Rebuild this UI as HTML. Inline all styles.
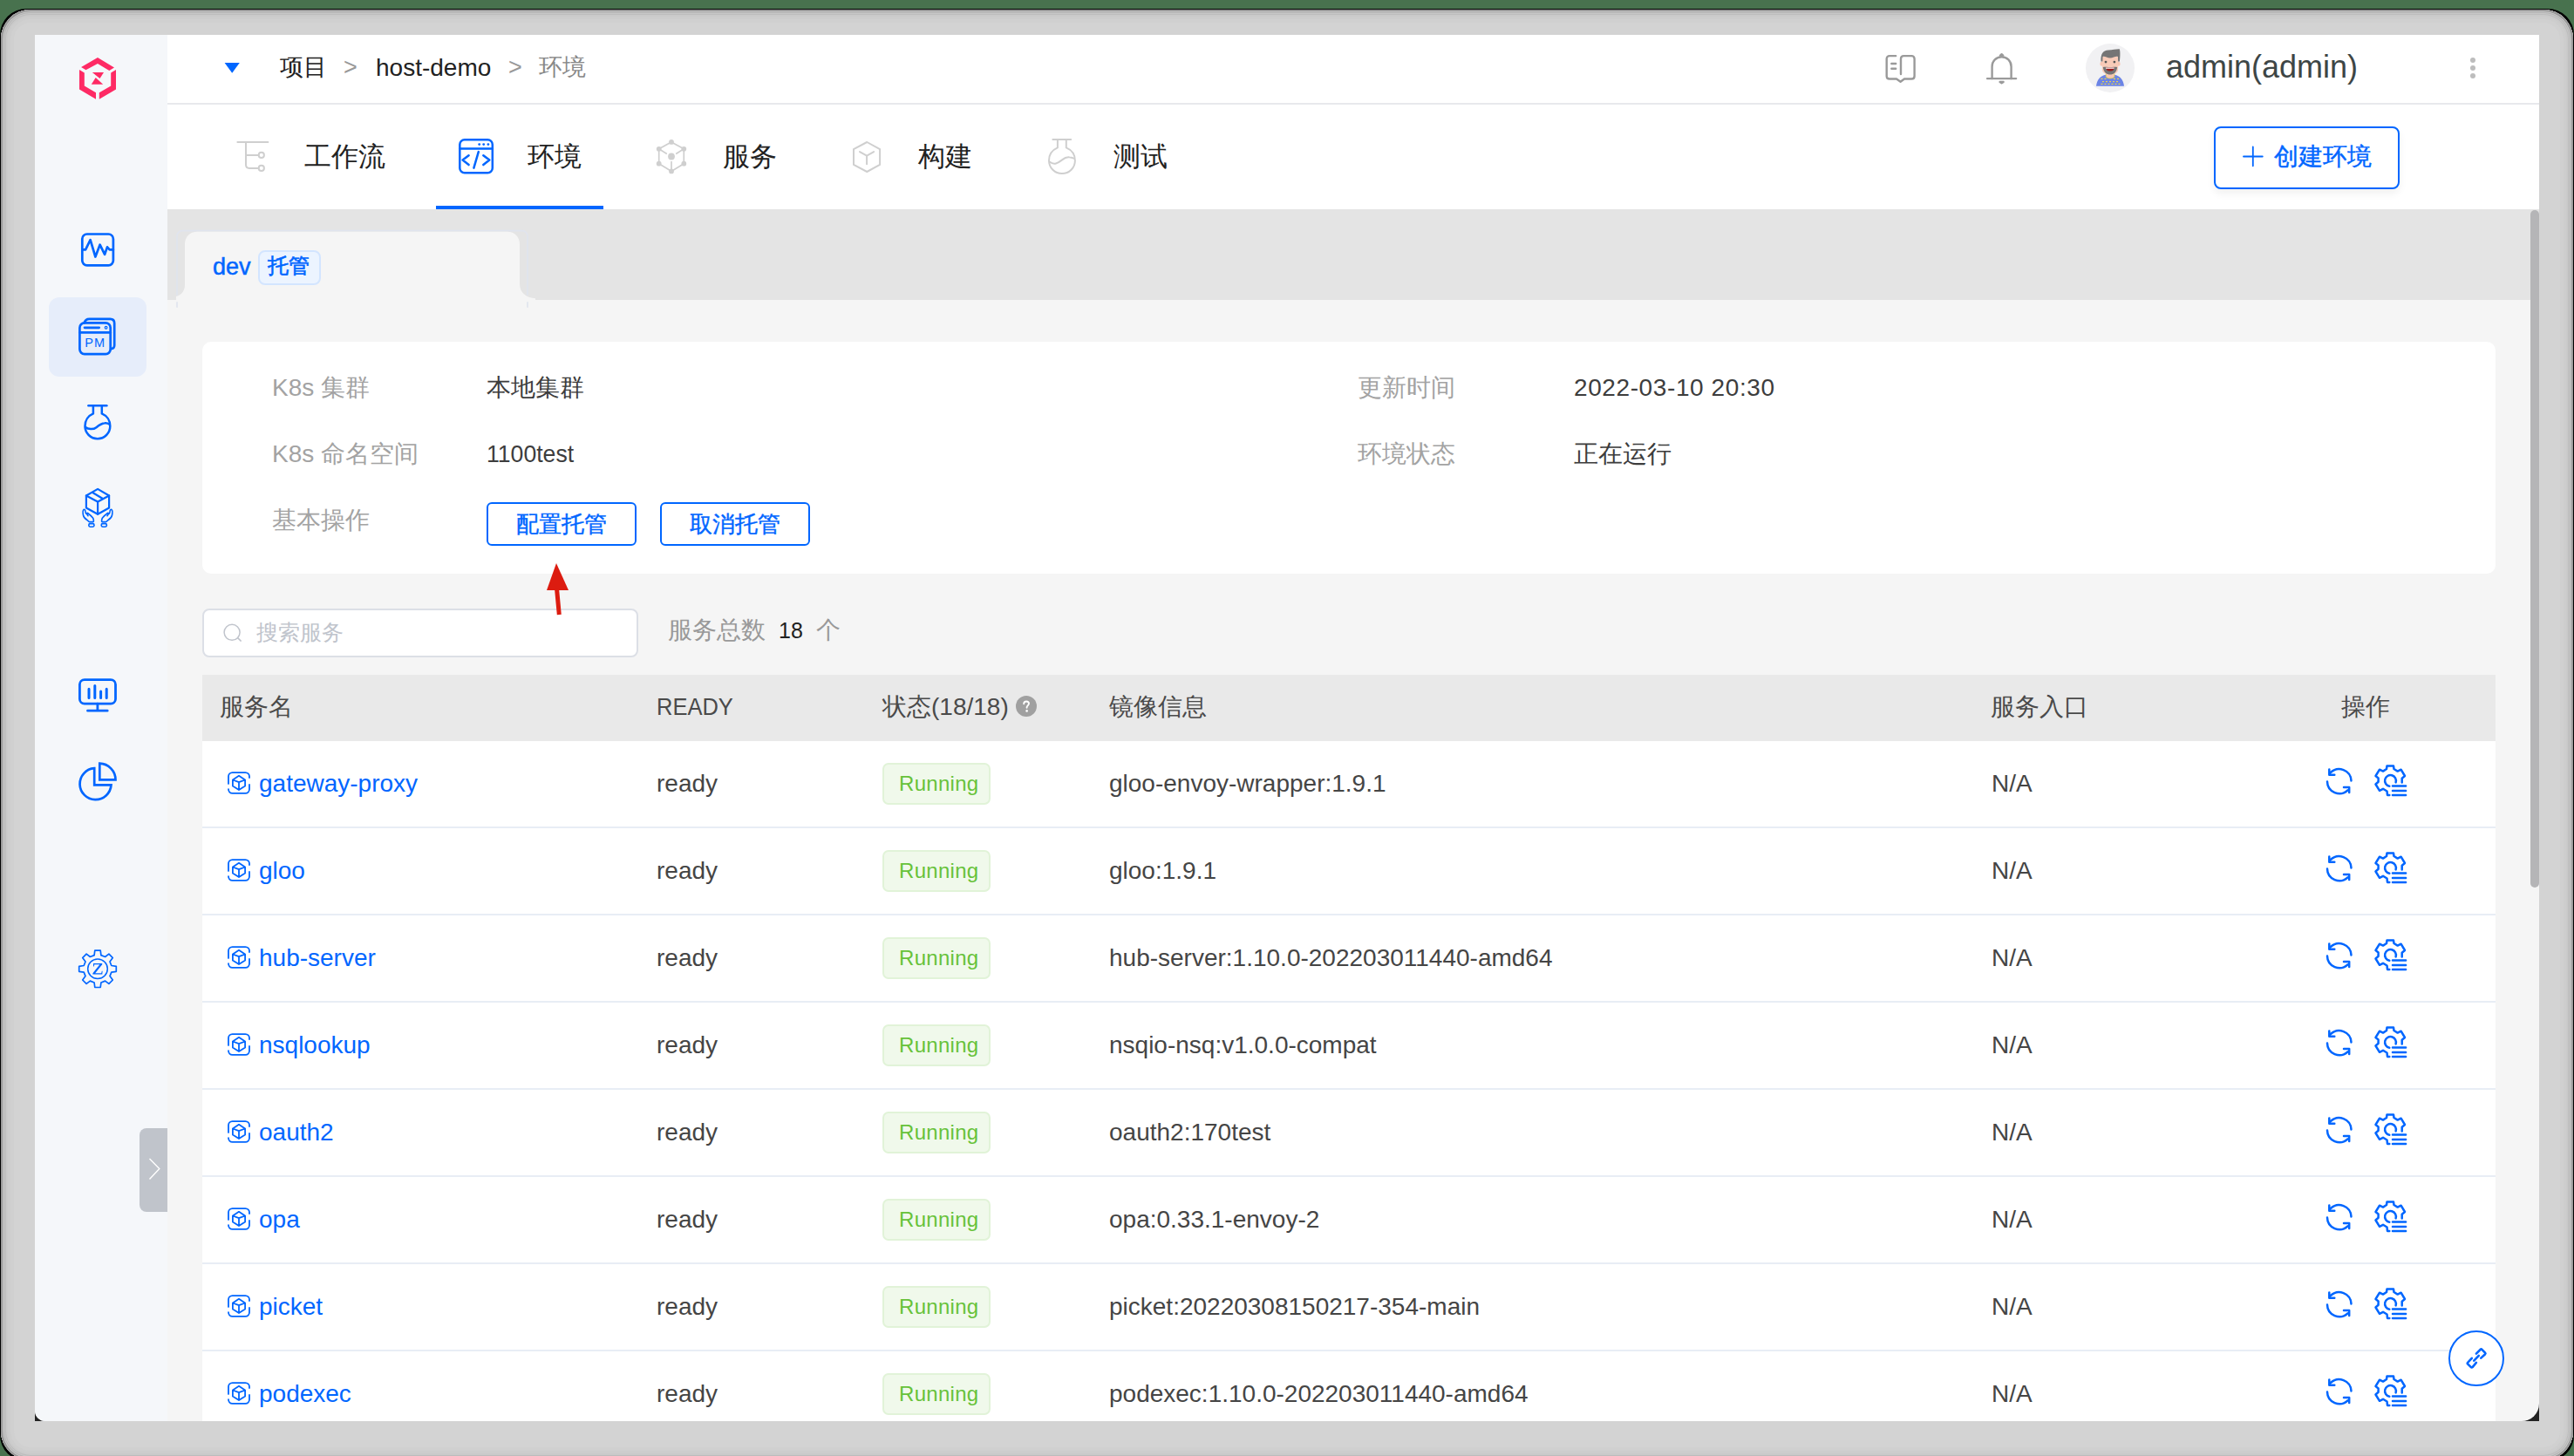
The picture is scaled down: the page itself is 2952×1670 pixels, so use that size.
<!DOCTYPE html>
<html><head><meta charset="utf-8">
<style>
*{box-sizing:border-box;margin:0;padding:0}
html,body{width:2952px;height:1670px;overflow:hidden;background:#48724e;font-family:"Liberation Sans",sans-serif}
.abs{position:absolute}
.t{position:absolute;white-space:nowrap;line-height:1}
svg{position:absolute;overflow:visible}
#frameblack{position:absolute;left:0;top:10px;width:2952px;height:1666px;border-radius:30px;background:#000}
#frame{position:absolute;left:1px;top:11px;width:2950px;height:1664px;border-radius:34px;background:#d3d3d3;box-shadow:inset 0 0 0 1px #9d9d9d,inset 0 0 0 2px #939393,inset 0 0 0 3px #c9c9c9,inset 0 0 0 4px #b3b3b3,inset 0 0 0 5px #c8c8c8,inset 0 0 0 6px #bdbdbd,inset 0 0 0 8px #cacaca,inset 0 0 0 11px #cdcdcd,inset 0 0 0 15px #d0d0d0}
#content{position:absolute;left:40px;top:40px;width:2872px;height:1590px;background:#f5f5f5;overflow:hidden;border-radius:0 0 20px 12px}
.blue{color:#0066ff}
</style></head><body>
<div id="frameblack"></div>
<div id="frame"></div>
<div class="abs" style="left:40px;top:1580px;width:2872px;height:50px;background:#222"></div>
<div id="content"></div>
<!-- sidebar -->
<div class="abs" style="left:40px;top:40px;width:152px;height:1590px;background:#f5f7fa;border-bottom-left-radius:12px"></div>
<!-- header -->
<div class="abs" style="left:192px;top:40px;width:2720px;height:78px;background:#fff"></div>
<div class="abs" style="left:192px;top:118px;width:2720px;height:2px;background:#e8e9ec"></div>
<div class="abs" style="left:192px;top:120px;width:2720px;height:120px;background:#fff"></div>
<!-- env band -->
<div class="abs" style="left:192px;top:240px;width:2720px;height:104px;background:#e4e4e4"></div>

<!-- logo -->
<svg style="left:0;top:0" width="200" height="120" viewBox="0 0 200 120">
<g fill="#fe2a64">
<path d="M93.1 77 L112 65.9 L131 77.5 L125.3 81 L112 72.9 L98.5 80.3 Z"/>
<path d="M91 80 L96.8 83.5 L96.8 98.5 L110 106.3 L110 113.7 L91 102.6 Z"/>
<path d="M133 80 L127.2 83.5 L127.2 98.5 L113.8 106.3 L113.8 113.7 L133 102.6 Z"/>
<path d="M105.8 83.1 L119 83.1 L114.5 89.9 Z"/>
<path d="M104.8 96.7 L118.2 96.7 L109.7 89 Z"/>
</g></svg>
<!-- sidebar icons -->
<svg style="left:82px;top:256px" width="60" height="60" viewBox="0 0 60 60" fill="none" stroke="#0066ff" stroke-width="2.7" stroke-linejoin="round" stroke-linecap="round">
<rect x="12.3" y="12.5" width="35.6" height="35.8" rx="5.5"/>
<path d="M12.5 30.3 L16.1 30.3 L21.6 19.2 L27.4 38.5 L32.6 24.7 L38.1 35.8 L41 27.4 L43.7 30.3 L47.9 30.3"/>
</svg>
<div class="abs" style="left:56px;top:341px;width:112px;height:91px;border-radius:12px;background:#e6edfa"></div>
<svg style="left:82px;top:355px" width="60" height="60" viewBox="0 0 60 60" fill="none" stroke="#0066ff" stroke-width="2.7" stroke-linejoin="round" stroke-linecap="round">
<path d="M14.6 15.4 C15.5 12 17.5 10.8 20.5 10.8 L44.4 10.8 C47.4 10.8 49.2 12.8 49.2 15.8 L49.2 41 C49.2 43.6 47.6 45 45.1 45.2"/>
<rect x="9.4" y="15.4" width="35.3" height="35.7" rx="5.5"/>
<path d="M9.4 26.4 L44.7 26.4"/>
<path d="M15 20.8 L31.7 20.8"/>
<circle cx="39.6" cy="20.8" r="0.6"/>
<text x="27.3" y="42.8" font-family="Liberation Sans" font-size="14.5" fill="#0066ff" stroke="none" text-anchor="middle" letter-spacing="1.2">PM</text>
</svg>
<svg style="left:82px;top:453px" width="60" height="60" viewBox="0 0 60 60" fill="none" stroke="#0066ff" stroke-width="2.5" stroke-linejoin="round" stroke-linecap="round">
<path d="M19.4 12.2 L40.4 12.2"/>
<path d="M24.9 12.2 L24.9 21.4 C19.3 23.8 15.5 29.3 15.5 35.8 C15.5 43.8 22 50.2 29.9 50.2 C37.8 50.2 44.3 43.8 44.3 35.8 C44.3 29.3 40.5 23.8 34.8 21.4 L34.8 12.2"/>
<path d="M16 37 C19 39.5 25 40 28.5 37.2 C31.5 34.8 34 32.8 38 32.3 C40 32 42 32.6 43.6 33.6"/>
</svg>
<svg style="left:82px;top:552px" width="60" height="60" viewBox="0 0 60 60" fill="none" stroke="#0066ff" stroke-width="2.2" stroke-linejoin="round" stroke-linecap="round">
<path d="M30.1 8.9 L43.1 16.5 L43.1 30.5 L30.1 37.7 L16.9 30.5 L16.9 16.5 Z"/>
<path d="M16.9 16.5 L30.1 23.5 L43.1 16.5 M30.1 23.5 L30.1 37.7"/>
<path d="M24.7 13.2 L35.5 19.8" />
<g stroke-width="1.6">
<path d="M14 32.5 C12.8 33.5 13 36.5 13.5 39 C14 41.5 15.5 43 18 44.5 C19.5 45.5 19.5 46.6 20.5 46.6 L25 46.6 C25.6 46.6 25.6 44 24.5 42 C23 40 20.5 38 18.5 36.5 C17.5 36 17 37.5 19 39.7 M14 32.5 C15 32 15.8 33 16 35 C16.2 37 17 38 18.5 36.5"/>
<path d="M46 32.5 C47.2 33.5 47 36.5 46.5 39 C46 41.5 44.5 43 42 44.5 C40.5 45.5 40.5 46.6 39.5 46.6 L35 46.6 C34.4 46.6 34.4 44 35.5 42 C37 40 39.5 38 41.5 36.5 C42.5 36 43 37.5 41 39.7 M46 32.5 C45 32 44.2 33 44 35 C43.8 37 43 38 41.5 36.5"/>
<rect x="19.8" y="48.6" width="6.2" height="3.6" rx="1.6"/>
<rect x="34.2" y="48.6" width="6.2" height="3.6" rx="1.6"/>
</g>
</svg>
<svg style="left:82px;top:766px" width="60" height="60" viewBox="0 0 60 60" fill="none" stroke="#0066ff" stroke-width="2.8" stroke-linejoin="round" stroke-linecap="round">
<rect x="9.4" y="13.6" width="41.1" height="27.6" rx="5.5"/>
<path d="M29.9 41.2 L29.9 49.2 M18.5 49.2 L41.2 49.2"/>
<path d="M20 24.3 L20 34.6 M26.8 20.4 L26.8 34.6 M33.6 27 L33.6 34.6 M40.2 24.3 L40.2 34.6" stroke-width="3"/>
</svg>
<svg style="left:82px;top:866px" width="60" height="60" viewBox="0 0 60 60" fill="none" stroke="#0066ff" stroke-width="2.7" stroke-linejoin="miter">
<path d="M32.3 9.7 L32.3 28.4 L50.5 28.4 A18.7 18.7 0 0 0 32.3 9.7 Z"/>
<path d="M26.2 15.2 L26.2 34.4 L45.5 34.4 A18 18 0 1 1 26.2 15.2 Z"/>
</svg>
<svg style="left:82px;top:1082px" width="60" height="60" viewBox="0 0 60 60" fill="none" stroke="#0066ff" stroke-width="1.7" stroke-linejoin="round">
<path id="gearz" d="M26.8 8.2 L33.2 8.2 L33.9 13.6 L38.6 15.5 L42.9 12.2 L47.3 16.6 L44 21 L45.8 25.5 L51.3 26.3 L51.3 32.3 L45.8 33.1 L44 37.6 L47.3 42 L42.9 46.4 L38.6 43.1 L33.9 45 L33.2 50.5 L26.8 50.5 L26.1 45 L21.4 43.1 L17.1 46.4 L12.7 42 L16 37.6 L14.2 33.1 L8.7 32.3 L8.7 26.3 L14.2 25.5 L16 21 L12.7 16.6 L17.1 12.2 L21.4 15.5 L26.1 13.6 Z"/>
<circle cx="30" cy="29.3" r="11.3" stroke-width="1.5"/>
<path d="M25 23 L35.2 23 L35.2 24.2 L27.2 34.2 L34.2 34.2 L34.8 31.8 L35.6 31.8 L35.3 35.5 L24.4 35.5 L24.4 34.3 L32.4 24.3 L26.2 24.3 L25.8 26.6 L25 26.6 Z" fill="#0066ff" stroke="none"/>
</svg>
<!-- sidebar collapse tab -->
<div class="abs" style="left:160px;top:1294px;width:32px;height:96px;background:#c0c4cb;border-radius:8px 0 0 8px"></div>
<svg style="left:160px;top:1294px" width="32" height="96" viewBox="0 0 32 96" fill="none" stroke="#fff" stroke-width="1.4"><path d="M11.5 35 L22.8 46.5 L11.5 58.5"/></svg>

<!-- header breadcrumb -->
<svg style="left:256px;top:70px" width="20" height="16" viewBox="0 0 20 16"><path d="M1.6 2 L18.8 2 L10.2 13.7 Z" fill="#0066ff"/></svg>
<div class="t" style="left:321px;top:64px;font-size:27px;color:#222">项目</div>
<div class="t" style="left:394px;top:64px;font-size:27px;color:#999">&gt;</div>
<div class="t" style="left:431px;top:64px;font-size:28px;color:#222">host-demo</div>
<div class="t" style="left:583px;top:64px;font-size:27px;color:#999">&gt;</div>
<div class="t" style="left:618px;top:64px;font-size:27px;color:#888">环境</div>
<!-- header right -->
<svg style="left:2150px;top:50px" width="60" height="60" viewBox="0 0 60 60" fill="none" stroke="#9a9a9a" stroke-width="2.4" stroke-linejoin="round" stroke-linecap="round">
<path d="M24.2 14.1 L17 14.1 C15 14.1 13.7 15.4 13.7 17.4 L13.7 37.2 C13.7 39.2 15 40.5 17 40.5 L25 40.5 L29.6 43.8 L34 40.5 L42.3 40.5 C44.3 40.5 45.6 39.2 45.6 37.2 L45.6 17.4 C45.6 15.4 44.3 14.1 42.3 14.1 L33.3 14.1 C31.3 14.1 30 15.4 30 17.4 L30 35"/>
<path d="M19.3 23 L24.2 23 M19.3 28.8 L24.2 28.8"/>
</svg>
<svg style="left:2266px;top:50px" width="60" height="60" viewBox="0 0 60 60" fill="none" stroke="#9a9a9a" stroke-width="2.4" stroke-linejoin="round" stroke-linecap="round">
<path d="M13.1 40.1 L46.1 40.1"/>
<path d="M18.6 40.1 L18.6 26.5 C18.6 20 23.5 15.3 29.6 15.3 C35.7 15.3 40.6 20 40.6 26.5 L40.6 40.1"/>
<path d="M28 13.6 L31.2 13.6 L29.6 12.2 Z" fill="#9a9a9a"/>
<path d="M27.6 44 L31.6 44 L29.6 45.3 Z" fill="#9a9a9a"/>
</svg>
<div class="abs" style="left:2392px;top:50px;width:56px;height:56px;border-radius:50%;background:#f1f1f3;overflow:hidden">
<svg style="left:0;top:0" width="56" height="56" viewBox="0 0 56 56">
<path d="M12 48.7 C13 41 17 37 23 35.8 L33 35.8 C39 37 43 41 44 48.7 Z" fill="#6b84e6"/>
<g fill="#e8d44d"><rect x="17.5" y="39.8" width="2" height="1.2"/><rect x="21.5" y="39.8" width="2" height="1.2"/><rect x="32" y="39.8" width="2" height="1.2"/><rect x="36" y="39.8" width="2" height="1.2"/>
<rect x="19" y="43" width="2" height="1.2"/><rect x="23" y="43" width="2" height="1.2"/><rect x="27" y="43" width="2" height="1.2"/><rect x="31" y="43" width="2" height="1.2"/><rect x="35" y="43" width="2" height="1.2"/>
<rect x="17.5" y="45.8" width="2" height="1.2"/><rect x="21.5" y="45.8" width="2" height="1.2"/><rect x="25.5" y="45.8" width="2" height="1.2"/><rect x="29.5" y="45.8" width="2" height="1.2"/><rect x="33.5" y="45.8" width="2" height="1.2"/><rect x="37.5" y="45.8" width="2" height="1.2"/></g>
<path d="M23.3 34 L23.3 38 C25 40.5 31 40.5 32.9 38 L32.9 34 Z" fill="#f7c6b4" stroke="#e8d44d" stroke-width="0.9"/>
<ellipse cx="18.2" cy="23.2" rx="1.8" ry="2.6" fill="#f7c6b4"/><ellipse cx="37.8" cy="23.2" rx="1.8" ry="2.6" fill="#f7c6b4"/>
<path d="M18.9 15 L37.1 15 L37.1 30 C37.1 33.5 33 35.6 28 35.6 C23 35.6 18.9 33.5 18.9 30 Z" fill="#f8cbb8"/>
<path d="M17.5 20.6 C17 12 19.5 8 26 7.6 C31 7.3 36 6 38.8 6.3 C39.8 9 39.5 16 38.9 20.6 L37.1 20.6 L37 15 C34 14 32 16.5 28 16.5 C24 16.5 22 14 19.5 15 L19.3 20.6 Z" fill="#757575"/>
<path d="M19.8 27 C20.5 33 24 35.6 28 35.6 C32 35.6 35.5 33 36.2 27 L34.5 26.8 C33 27 23 27 21.5 26.8 Z" fill="#757575"/>
<path d="M22.8 27.4 L32.9 27.4 L32 30 C30.5 32 25.5 32 24 30 Z" fill="#9b1c1c"/>
<path d="M22.8 27.4 L32.9 27.4 L32.6 28.7 L23.1 28.7 Z" fill="#fff"/>
<circle cx="23" cy="21.1" r="1.4" fill="#555"/><circle cx="32.9" cy="21.1" r="1.4" fill="#555"/>
</svg></div>
<div class="t" style="left:2484px;top:59px;font-size:36px;color:#3e4646">admin(admin)</div>
<div class="abs" style="left:2833px;top:66px;width:6px;height:6px;border-radius:50%;background:#bdbdbd"></div>
<div class="abs" style="left:2833px;top:75px;width:6px;height:6px;border-radius:50%;background:#bdbdbd"></div>
<div class="abs" style="left:2833px;top:84px;width:6px;height:6px;border-radius:50%;background:#bdbdbd"></div>
<!-- tabs -->
<svg style="left:260px;top:150px" width="60" height="60" viewBox="0 0 60 60" fill="none" stroke="#cfcfcf" stroke-width="2" stroke-linecap="round" stroke-linejoin="round">
<path d="M12.4 12.9 L47.4 12.9"/>
<path d="M22 12.9 L22 39 C22 41.5 23.5 42.9 26 42.9 L36 42.9"/>
<path d="M22 27.9 L36 27.9"/>
<circle cx="39.8" cy="27.9" r="3.1"/>
<circle cx="39.8" cy="42.9" r="3.1"/>
</svg>
<div class="t" style="left:349px;top:164px;font-size:31px;color:#222">工作流</div>
<svg style="left:516px;top:150px" width="60" height="60" viewBox="0 0 60 60" fill="none" stroke="#0066ff" stroke-width="2.5" stroke-linecap="round" stroke-linejoin="round">
<rect x="11.3" y="10.3" width="37.5" height="38" rx="5.5"/>
<path d="M11.3 20.6 L48.8 20.6"/>
<path d="M21.6 28.2 L14.6 33.6 L21.6 39.1 M32.8 24.1 L27.4 42.6 M38.3 28.2 L45.3 33.6 L38.3 39.1"/>
<g fill="#0066ff" stroke="none"><circle cx="33.7" cy="15.6" r="1.4"/><circle cx="38.7" cy="15.6" r="1.4"/><circle cx="43.9" cy="15.6" r="1.4"/></g>
</svg>
<div class="t" style="left:605px;top:164px;font-size:31px;color:#222">环境</div>
<div class="abs" style="left:500px;top:236px;width:192px;height:4px;background:#0066ff"></div>
<svg style="left:740px;top:150px" width="60" height="60" viewBox="0 0 60 60" fill="#cfcfcf" stroke="#cfcfcf" stroke-width="1.7">
<path d="M30 12.9 L44.3 20.8 L44.3 37.7 L30 46.4 L15.7 37.7 L15.7 20.8 Z" fill="none"/>
<path d="M15.7 20.8 L24.8 26.5 M44.3 20.8 L35.2 26.5 M30 35 L30 46.4" fill="none"/>
<circle cx="30" cy="12.9" r="2.9" stroke="none"/><circle cx="15.7" cy="20.8" r="2.9" stroke="none"/><circle cx="44.3" cy="20.8" r="2.9" stroke="none"/>
<circle cx="15.7" cy="37.7" r="2.9" stroke="none"/><circle cx="44.3" cy="37.7" r="2.9" stroke="none"/><circle cx="30" cy="46.4" r="2.9" stroke="none"/>
<circle cx="30" cy="29.5" r="3.9" stroke="none"/>
</svg>
<div class="t" style="left:829px;top:164px;font-size:31px;color:#222">服务</div>
<svg style="left:964px;top:150px" width="60" height="60" viewBox="0 0 60 60" fill="none" stroke="#cfcfcf" stroke-width="2" stroke-linecap="round" stroke-linejoin="round">
<path d="M30.3 13 L45.1 21.2 L45.1 38.9 L30.3 47 L15 38.9 L15 21.2 Z"/>
<path d="M22 24.1 L30.1 28.6 L38.1 24.1 M30.1 28.6 L30.1 38.3"/>
</svg>
<div class="t" style="left:1053px;top:164px;font-size:31px;color:#222">构建</div>
<svg style="left:1188px;top:150px" width="60" height="60" viewBox="0 0 60 60" fill="none" stroke="#cfcfcf" stroke-width="2" stroke-linecap="round" stroke-linejoin="round">
<path d="M19.4 9.9 L40.2 9.9"/>
<path d="M24.9 9.9 L24.9 19.4 C19 22 15 27.5 15 34.2 C15 42.4 21.7 49 30 49 C38.3 49 44.9 42.4 44.9 34.2 C44.9 27.5 41 22 34.8 19.4 L34.8 9.9"/>
<path d="M16 35.8 C18.5 37.8 21 38 23 37.5 C26 36.8 28 34.8 30 33.4 C33 31 36 30 38.3 30.3 C40.5 30.5 42 31 43.5 31.6"/>
</svg>
<div class="t" style="left:1277px;top:164px;font-size:31px;color:#222">测试</div>
<!-- create env button -->
<div class="abs" style="left:2539px;top:145px;width:213px;height:72px;border:2px solid #0066ff;border-radius:8px;background:#fff;box-shadow:0 5px 10px rgba(0,0,0,0.06)"></div>
<svg style="left:2570px;top:166px" width="28" height="28" viewBox="0 0 28 28" stroke="#0066ff" stroke-width="1.8" stroke-linecap="round"><path d="M13.8 2.5 L13.8 24.3 M3 13.5 L24.8 13.5"/></svg>
<div class="t" style="left:2608px;top:166px;font-size:28px;color:#0066ff;font-weight:500;-webkit-text-stroke:0.4px #0066ff">创建环境</div>

<!-- env tab -->
<svg style="left:192px;top:240px" width="440" height="120" viewBox="0 0 440 120">
<path d="M11 98.7 L11 30.7 C11 27.2 13.8 24.7 17.4 24.7 L406.6 24.7 C410.2 24.7 413 27.2 413 30.7 L413 98.7 M11 106.3 L11 112.8 M413 106.3 L413 112.8" fill="none" stroke="#e0e4ee" stroke-width="1.7"/>
<path d="M10 104 L10 100.1 C16 98.5 20 93.5 20 87 L20 40 C20 31.7 26 25.8 34 25.8 L390 25.8 C398 25.8 404 31.7 404 40 L404 85.7 C404 95 411 101.5 422 102.3 L422 104 Z" fill="#f5f5f5"/>
</svg>
<div class="t" style="left:244px;top:293px;font-size:27px;color:#0066ff;-webkit-text-stroke:0.5px #0066ff">dev</div>
<div class="abs" style="left:296px;top:287px;width:72px;height:40px;border-radius:8px;background:#ecf4ff;border:2px solid #d3e5ff"></div>
<div class="t" style="left:307px;top:293px;font-size:24px;color:#0066ff;font-weight:500;-webkit-text-stroke:0.6px #0066ff">托管</div>
<!-- info card -->
<div class="abs" style="left:232px;top:392px;width:2630px;height:266px;border-radius:10px;background:#fff"></div>
<div class="t" style="left:312px;top:431px;font-size:28px;color:#a3a3a3">K8s 集群</div>
<div class="t" style="left:558px;top:431px;font-size:28px;color:#3d3d3d">本地集群</div>
<div class="t" style="left:312px;top:507px;font-size:28px;color:#a3a3a3">K8s 命名空间</div>
<div class="t" style="left:558px;top:507px;font-size:28px;color:#3d3d3d;transform:scaleX(0.95);transform-origin:0 0">1100test</div>
<div class="t" style="left:312px;top:583px;font-size:28px;color:#a3a3a3">基本操作</div>
<div class="abs" style="left:558px;top:576px;width:172px;height:50px;border:2px solid #0066ff;border-radius:6px"></div>
<div class="t" style="left:592px;top:588px;font-size:26px;color:#0066ff;font-weight:500;-webkit-text-stroke:0.4px #0066ff">配置托管</div>
<div class="abs" style="left:757px;top:576px;width:172px;height:50px;border:2px solid #0066ff;border-radius:6px"></div>
<div class="t" style="left:791px;top:588px;font-size:26px;color:#0066ff;font-weight:500;-webkit-text-stroke:0.4px #0066ff">取消托管</div>
<div class="t" style="left:1557px;top:431px;font-size:28px;color:#a3a3a3">更新时间</div>
<div class="t" style="left:1805px;top:431px;font-size:28px;color:#3d3d3d;letter-spacing:0.6px">2022-03-10 20:30</div>
<div class="t" style="left:1557px;top:507px;font-size:28px;color:#a3a3a3">环境状态</div>
<div class="t" style="left:1805px;top:507px;font-size:28px;color:#3d3d3d">正在运行</div>
<!-- red arrow -->
<svg style="left:600px;top:640px;z-index:5" width="80" height="80" viewBox="0 0 80 80">
<path d="M38 6 L52 37 L27 37 Z" fill="#dc1c10"/>
<path d="M38.5 35 L41.3 65" stroke="#dc1c10" stroke-width="5"/>
</svg>
<!-- search -->
<div class="abs" style="left:232px;top:698px;width:500px;height:56px;border:2px solid #dcdfe6;border-radius:8px;background:#fff"></div>
<svg style="left:254px;top:713px" width="26" height="26" viewBox="0 0 26 26" fill="none" stroke="#c0c4cc" stroke-width="1.5" stroke-linecap="round"><circle cx="12.1" cy="12.3" r="9"/><path d="M18.6 18.6 L22.2 22.1"/></svg>
<div class="t" style="left:294px;top:713px;font-size:25px;color:#c0c4cc">搜索服务</div>
<div class="t" style="left:766px;top:709px;font-size:28px;color:#999">服务总数</div>
<div class="t" style="left:893px;top:711px;font-size:25px;color:#222">18</div>
<div class="t" style="left:936px;top:709px;font-size:28px;color:#999">个</div>
<!-- table header -->
<div class="abs" style="left:232px;top:774px;width:2630px;height:76px;background:#e9e9e9"></div>
<div class="t" style="left:252px;top:797px;font-size:28px;color:#4a4a4a">服务名</div>
<div class="t" style="left:753px;top:797px;font-size:28px;color:#4a4a4a;transform:scaleX(0.91);transform-origin:0 0">READY</div>
<div class="t" style="left:1012px;top:797px;font-size:28px;color:#4a4a4a">状态(18/18)</div>
<svg style="left:1165px;top:798px" width="24" height="24" viewBox="0 0 24 24"><circle cx="12" cy="12" r="12" fill="#a0a0a0"/><path d="M9.2 9.3 C9.2 7.6 10.5 6.5 12.1 6.5 C13.8 6.5 15 7.6 15 9.1 C15 11 12.6 11.2 12.6 13.3 L12.6 13.8" fill="none" stroke="#fff" stroke-width="1.9" stroke-linecap="round"/><circle cx="12.6" cy="17.4" r="1.3" fill="#fff"/></svg>
<div class="t" style="left:1272px;top:797px;font-size:28px;color:#4a4a4a">镜像信息</div>
<div class="t" style="left:2283px;top:797px;font-size:28px;color:#4a4a4a">服务入口</div>
<div class="t" style="left:2685px;top:797px;font-size:28px;color:#4a4a4a">操作</div>
<!-- rows -->
<div class="abs" style="left:232px;top:850px;width:2630px;height:100px;background:#fff;border-bottom:2px solid #e8edf5"></div>
<svg style="left:254px;top:878px" width="40" height="40" viewBox="0 0 40 40" fill="none" stroke="#0066ff" stroke-width="1.8" stroke-linecap="round" stroke-linejoin="round"><path d="M8 20.9 L8 12.6 C8 10 10 8.1 12.6 8.1 L27.4 8.1 C30 8.1 32 10 32 12.6 L32 14 M32 22 L32 27.3 C32 29.8 30 31.8 27.4 31.8 L12.6 31.8 C10 31.8 8 29.8 8 27.3 L8 27.2"/><path d="M20 11.8 L27.1 16.5 L27.1 23.5 L20 28 L12.9 23.5 L12.9 16.5 Z M12.9 16.5 L20 19.2 L27.1 16.5 M20 19.2 L20 28"/></svg>
<div class="t" style="left:297px;top:885px;font-size:28px;color:#0066ff">gateway-proxy</div>
<div class="t" style="left:753px;top:885px;font-size:28px;color:#454545">ready</div>
<div class="abs" style="left:1012px;top:875px;width:124px;height:48px;border-radius:7px;background:#f0f9eb;border:2px solid #e1f3d8"></div>
<div class="t" style="left:1031px;top:887px;font-size:24px;color:#67c23a;letter-spacing:0.3px">Running</div>
<div class="t" style="left:1272px;top:885px;font-size:28px;color:#454545">gloo-envoy-wrapper:1.9.1</div>
<div class="t" style="left:2284px;top:885px;font-size:28px;color:#454545">N/A</div>
<svg style="left:2660px;top:870px" width="110" height="55" viewBox="0 0 110 55" fill="none" stroke="#0066ff" stroke-width="2.5" stroke-linecap="round" stroke-linejoin="round">
<path d="M36.5 25.4 A13.9 13.9 0 0 0 12.8 16.2 M11.3 12.4 L11.3 18.8 L17.3 18.8"/>
<path d="M9 26.5 A13.9 13.9 0 0 0 32.5 36.3 M28 32.9 L34.2 32.9 L34.2 39.1"/>
<path d="M80.3 41.9 L78 41.9 L77.5 37.5 L73 34.8 L69 36.8 L64.5 29.5 L67.6 26.8 L67.6 22.5 L64.5 20 L69 12.7 L73 14.6 L77 12 L77.5 8.5 L85 8.5 L85.5 12 L89.7 14.6 L93.6 12.7 L98 20 L94.7 22.7 L94.7 27.4"/>
<path d="M87.6 27.4 A6.4 6.4 0 1 0 80.3 31.8"/>
<path d="M84 31.6 L99.1 31.6 M84 37 L99.1 37 M84 42.1 L99.1 42.1"/>
</svg>

<div class="abs" style="left:232px;top:950px;width:2630px;height:100px;background:#fff;border-bottom:2px solid #e8edf5"></div>
<svg style="left:254px;top:978px" width="40" height="40" viewBox="0 0 40 40" fill="none" stroke="#0066ff" stroke-width="1.8" stroke-linecap="round" stroke-linejoin="round"><path d="M8 20.9 L8 12.6 C8 10 10 8.1 12.6 8.1 L27.4 8.1 C30 8.1 32 10 32 12.6 L32 14 M32 22 L32 27.3 C32 29.8 30 31.8 27.4 31.8 L12.6 31.8 C10 31.8 8 29.8 8 27.3 L8 27.2"/><path d="M20 11.8 L27.1 16.5 L27.1 23.5 L20 28 L12.9 23.5 L12.9 16.5 Z M12.9 16.5 L20 19.2 L27.1 16.5 M20 19.2 L20 28"/></svg>
<div class="t" style="left:297px;top:985px;font-size:28px;color:#0066ff">gloo</div>
<div class="t" style="left:753px;top:985px;font-size:28px;color:#454545">ready</div>
<div class="abs" style="left:1012px;top:975px;width:124px;height:48px;border-radius:7px;background:#f0f9eb;border:2px solid #e1f3d8"></div>
<div class="t" style="left:1031px;top:987px;font-size:24px;color:#67c23a;letter-spacing:0.3px">Running</div>
<div class="t" style="left:1272px;top:985px;font-size:28px;color:#454545">gloo:1.9.1</div>
<div class="t" style="left:2284px;top:985px;font-size:28px;color:#454545">N/A</div>
<svg style="left:2660px;top:970px" width="110" height="55" viewBox="0 0 110 55" fill="none" stroke="#0066ff" stroke-width="2.5" stroke-linecap="round" stroke-linejoin="round">
<path d="M36.5 25.4 A13.9 13.9 0 0 0 12.8 16.2 M11.3 12.4 L11.3 18.8 L17.3 18.8"/>
<path d="M9 26.5 A13.9 13.9 0 0 0 32.5 36.3 M28 32.9 L34.2 32.9 L34.2 39.1"/>
<path d="M80.3 41.9 L78 41.9 L77.5 37.5 L73 34.8 L69 36.8 L64.5 29.5 L67.6 26.8 L67.6 22.5 L64.5 20 L69 12.7 L73 14.6 L77 12 L77.5 8.5 L85 8.5 L85.5 12 L89.7 14.6 L93.6 12.7 L98 20 L94.7 22.7 L94.7 27.4"/>
<path d="M87.6 27.4 A6.4 6.4 0 1 0 80.3 31.8"/>
<path d="M84 31.6 L99.1 31.6 M84 37 L99.1 37 M84 42.1 L99.1 42.1"/>
</svg>

<div class="abs" style="left:232px;top:1050px;width:2630px;height:100px;background:#fff;border-bottom:2px solid #e8edf5"></div>
<svg style="left:254px;top:1078px" width="40" height="40" viewBox="0 0 40 40" fill="none" stroke="#0066ff" stroke-width="1.8" stroke-linecap="round" stroke-linejoin="round"><path d="M8 20.9 L8 12.6 C8 10 10 8.1 12.6 8.1 L27.4 8.1 C30 8.1 32 10 32 12.6 L32 14 M32 22 L32 27.3 C32 29.8 30 31.8 27.4 31.8 L12.6 31.8 C10 31.8 8 29.8 8 27.3 L8 27.2"/><path d="M20 11.8 L27.1 16.5 L27.1 23.5 L20 28 L12.9 23.5 L12.9 16.5 Z M12.9 16.5 L20 19.2 L27.1 16.5 M20 19.2 L20 28"/></svg>
<div class="t" style="left:297px;top:1085px;font-size:28px;color:#0066ff">hub-server</div>
<div class="t" style="left:753px;top:1085px;font-size:28px;color:#454545">ready</div>
<div class="abs" style="left:1012px;top:1075px;width:124px;height:48px;border-radius:7px;background:#f0f9eb;border:2px solid #e1f3d8"></div>
<div class="t" style="left:1031px;top:1087px;font-size:24px;color:#67c23a;letter-spacing:0.3px">Running</div>
<div class="t" style="left:1272px;top:1085px;font-size:28px;color:#454545">hub-server:1.10.0-202203011440-amd64</div>
<div class="t" style="left:2284px;top:1085px;font-size:28px;color:#454545">N/A</div>
<svg style="left:2660px;top:1070px" width="110" height="55" viewBox="0 0 110 55" fill="none" stroke="#0066ff" stroke-width="2.5" stroke-linecap="round" stroke-linejoin="round">
<path d="M36.5 25.4 A13.9 13.9 0 0 0 12.8 16.2 M11.3 12.4 L11.3 18.8 L17.3 18.8"/>
<path d="M9 26.5 A13.9 13.9 0 0 0 32.5 36.3 M28 32.9 L34.2 32.9 L34.2 39.1"/>
<path d="M80.3 41.9 L78 41.9 L77.5 37.5 L73 34.8 L69 36.8 L64.5 29.5 L67.6 26.8 L67.6 22.5 L64.5 20 L69 12.7 L73 14.6 L77 12 L77.5 8.5 L85 8.5 L85.5 12 L89.7 14.6 L93.6 12.7 L98 20 L94.7 22.7 L94.7 27.4"/>
<path d="M87.6 27.4 A6.4 6.4 0 1 0 80.3 31.8"/>
<path d="M84 31.6 L99.1 31.6 M84 37 L99.1 37 M84 42.1 L99.1 42.1"/>
</svg>

<div class="abs" style="left:232px;top:1150px;width:2630px;height:100px;background:#fff;border-bottom:2px solid #e8edf5"></div>
<svg style="left:254px;top:1178px" width="40" height="40" viewBox="0 0 40 40" fill="none" stroke="#0066ff" stroke-width="1.8" stroke-linecap="round" stroke-linejoin="round"><path d="M8 20.9 L8 12.6 C8 10 10 8.1 12.6 8.1 L27.4 8.1 C30 8.1 32 10 32 12.6 L32 14 M32 22 L32 27.3 C32 29.8 30 31.8 27.4 31.8 L12.6 31.8 C10 31.8 8 29.8 8 27.3 L8 27.2"/><path d="M20 11.8 L27.1 16.5 L27.1 23.5 L20 28 L12.9 23.5 L12.9 16.5 Z M12.9 16.5 L20 19.2 L27.1 16.5 M20 19.2 L20 28"/></svg>
<div class="t" style="left:297px;top:1185px;font-size:28px;color:#0066ff">nsqlookup</div>
<div class="t" style="left:753px;top:1185px;font-size:28px;color:#454545">ready</div>
<div class="abs" style="left:1012px;top:1175px;width:124px;height:48px;border-radius:7px;background:#f0f9eb;border:2px solid #e1f3d8"></div>
<div class="t" style="left:1031px;top:1187px;font-size:24px;color:#67c23a;letter-spacing:0.3px">Running</div>
<div class="t" style="left:1272px;top:1185px;font-size:28px;color:#454545">nsqio-nsq:v1.0.0-compat</div>
<div class="t" style="left:2284px;top:1185px;font-size:28px;color:#454545">N/A</div>
<svg style="left:2660px;top:1170px" width="110" height="55" viewBox="0 0 110 55" fill="none" stroke="#0066ff" stroke-width="2.5" stroke-linecap="round" stroke-linejoin="round">
<path d="M36.5 25.4 A13.9 13.9 0 0 0 12.8 16.2 M11.3 12.4 L11.3 18.8 L17.3 18.8"/>
<path d="M9 26.5 A13.9 13.9 0 0 0 32.5 36.3 M28 32.9 L34.2 32.9 L34.2 39.1"/>
<path d="M80.3 41.9 L78 41.9 L77.5 37.5 L73 34.8 L69 36.8 L64.5 29.5 L67.6 26.8 L67.6 22.5 L64.5 20 L69 12.7 L73 14.6 L77 12 L77.5 8.5 L85 8.5 L85.5 12 L89.7 14.6 L93.6 12.7 L98 20 L94.7 22.7 L94.7 27.4"/>
<path d="M87.6 27.4 A6.4 6.4 0 1 0 80.3 31.8"/>
<path d="M84 31.6 L99.1 31.6 M84 37 L99.1 37 M84 42.1 L99.1 42.1"/>
</svg>

<div class="abs" style="left:232px;top:1250px;width:2630px;height:100px;background:#fff;border-bottom:2px solid #e8edf5"></div>
<svg style="left:254px;top:1278px" width="40" height="40" viewBox="0 0 40 40" fill="none" stroke="#0066ff" stroke-width="1.8" stroke-linecap="round" stroke-linejoin="round"><path d="M8 20.9 L8 12.6 C8 10 10 8.1 12.6 8.1 L27.4 8.1 C30 8.1 32 10 32 12.6 L32 14 M32 22 L32 27.3 C32 29.8 30 31.8 27.4 31.8 L12.6 31.8 C10 31.8 8 29.8 8 27.3 L8 27.2"/><path d="M20 11.8 L27.1 16.5 L27.1 23.5 L20 28 L12.9 23.5 L12.9 16.5 Z M12.9 16.5 L20 19.2 L27.1 16.5 M20 19.2 L20 28"/></svg>
<div class="t" style="left:297px;top:1285px;font-size:28px;color:#0066ff">oauth2</div>
<div class="t" style="left:753px;top:1285px;font-size:28px;color:#454545">ready</div>
<div class="abs" style="left:1012px;top:1275px;width:124px;height:48px;border-radius:7px;background:#f0f9eb;border:2px solid #e1f3d8"></div>
<div class="t" style="left:1031px;top:1287px;font-size:24px;color:#67c23a;letter-spacing:0.3px">Running</div>
<div class="t" style="left:1272px;top:1285px;font-size:28px;color:#454545">oauth2:170test</div>
<div class="t" style="left:2284px;top:1285px;font-size:28px;color:#454545">N/A</div>
<svg style="left:2660px;top:1270px" width="110" height="55" viewBox="0 0 110 55" fill="none" stroke="#0066ff" stroke-width="2.5" stroke-linecap="round" stroke-linejoin="round">
<path d="M36.5 25.4 A13.9 13.9 0 0 0 12.8 16.2 M11.3 12.4 L11.3 18.8 L17.3 18.8"/>
<path d="M9 26.5 A13.9 13.9 0 0 0 32.5 36.3 M28 32.9 L34.2 32.9 L34.2 39.1"/>
<path d="M80.3 41.9 L78 41.9 L77.5 37.5 L73 34.8 L69 36.8 L64.5 29.5 L67.6 26.8 L67.6 22.5 L64.5 20 L69 12.7 L73 14.6 L77 12 L77.5 8.5 L85 8.5 L85.5 12 L89.7 14.6 L93.6 12.7 L98 20 L94.7 22.7 L94.7 27.4"/>
<path d="M87.6 27.4 A6.4 6.4 0 1 0 80.3 31.8"/>
<path d="M84 31.6 L99.1 31.6 M84 37 L99.1 37 M84 42.1 L99.1 42.1"/>
</svg>

<div class="abs" style="left:232px;top:1350px;width:2630px;height:100px;background:#fff;border-bottom:2px solid #e8edf5"></div>
<svg style="left:254px;top:1378px" width="40" height="40" viewBox="0 0 40 40" fill="none" stroke="#0066ff" stroke-width="1.8" stroke-linecap="round" stroke-linejoin="round"><path d="M8 20.9 L8 12.6 C8 10 10 8.1 12.6 8.1 L27.4 8.1 C30 8.1 32 10 32 12.6 L32 14 M32 22 L32 27.3 C32 29.8 30 31.8 27.4 31.8 L12.6 31.8 C10 31.8 8 29.8 8 27.3 L8 27.2"/><path d="M20 11.8 L27.1 16.5 L27.1 23.5 L20 28 L12.9 23.5 L12.9 16.5 Z M12.9 16.5 L20 19.2 L27.1 16.5 M20 19.2 L20 28"/></svg>
<div class="t" style="left:297px;top:1385px;font-size:28px;color:#0066ff">opa</div>
<div class="t" style="left:753px;top:1385px;font-size:28px;color:#454545">ready</div>
<div class="abs" style="left:1012px;top:1375px;width:124px;height:48px;border-radius:7px;background:#f0f9eb;border:2px solid #e1f3d8"></div>
<div class="t" style="left:1031px;top:1387px;font-size:24px;color:#67c23a;letter-spacing:0.3px">Running</div>
<div class="t" style="left:1272px;top:1385px;font-size:28px;color:#454545">opa:0.33.1-envoy-2</div>
<div class="t" style="left:2284px;top:1385px;font-size:28px;color:#454545">N/A</div>
<svg style="left:2660px;top:1370px" width="110" height="55" viewBox="0 0 110 55" fill="none" stroke="#0066ff" stroke-width="2.5" stroke-linecap="round" stroke-linejoin="round">
<path d="M36.5 25.4 A13.9 13.9 0 0 0 12.8 16.2 M11.3 12.4 L11.3 18.8 L17.3 18.8"/>
<path d="M9 26.5 A13.9 13.9 0 0 0 32.5 36.3 M28 32.9 L34.2 32.9 L34.2 39.1"/>
<path d="M80.3 41.9 L78 41.9 L77.5 37.5 L73 34.8 L69 36.8 L64.5 29.5 L67.6 26.8 L67.6 22.5 L64.5 20 L69 12.7 L73 14.6 L77 12 L77.5 8.5 L85 8.5 L85.5 12 L89.7 14.6 L93.6 12.7 L98 20 L94.7 22.7 L94.7 27.4"/>
<path d="M87.6 27.4 A6.4 6.4 0 1 0 80.3 31.8"/>
<path d="M84 31.6 L99.1 31.6 M84 37 L99.1 37 M84 42.1 L99.1 42.1"/>
</svg>

<div class="abs" style="left:232px;top:1450px;width:2630px;height:100px;background:#fff;border-bottom:2px solid #e8edf5"></div>
<svg style="left:254px;top:1478px" width="40" height="40" viewBox="0 0 40 40" fill="none" stroke="#0066ff" stroke-width="1.8" stroke-linecap="round" stroke-linejoin="round"><path d="M8 20.9 L8 12.6 C8 10 10 8.1 12.6 8.1 L27.4 8.1 C30 8.1 32 10 32 12.6 L32 14 M32 22 L32 27.3 C32 29.8 30 31.8 27.4 31.8 L12.6 31.8 C10 31.8 8 29.8 8 27.3 L8 27.2"/><path d="M20 11.8 L27.1 16.5 L27.1 23.5 L20 28 L12.9 23.5 L12.9 16.5 Z M12.9 16.5 L20 19.2 L27.1 16.5 M20 19.2 L20 28"/></svg>
<div class="t" style="left:297px;top:1485px;font-size:28px;color:#0066ff">picket</div>
<div class="t" style="left:753px;top:1485px;font-size:28px;color:#454545">ready</div>
<div class="abs" style="left:1012px;top:1475px;width:124px;height:48px;border-radius:7px;background:#f0f9eb;border:2px solid #e1f3d8"></div>
<div class="t" style="left:1031px;top:1487px;font-size:24px;color:#67c23a;letter-spacing:0.3px">Running</div>
<div class="t" style="left:1272px;top:1485px;font-size:28px;color:#454545">picket:20220308150217-354-main</div>
<div class="t" style="left:2284px;top:1485px;font-size:28px;color:#454545">N/A</div>
<svg style="left:2660px;top:1470px" width="110" height="55" viewBox="0 0 110 55" fill="none" stroke="#0066ff" stroke-width="2.5" stroke-linecap="round" stroke-linejoin="round">
<path d="M36.5 25.4 A13.9 13.9 0 0 0 12.8 16.2 M11.3 12.4 L11.3 18.8 L17.3 18.8"/>
<path d="M9 26.5 A13.9 13.9 0 0 0 32.5 36.3 M28 32.9 L34.2 32.9 L34.2 39.1"/>
<path d="M80.3 41.9 L78 41.9 L77.5 37.5 L73 34.8 L69 36.8 L64.5 29.5 L67.6 26.8 L67.6 22.5 L64.5 20 L69 12.7 L73 14.6 L77 12 L77.5 8.5 L85 8.5 L85.5 12 L89.7 14.6 L93.6 12.7 L98 20 L94.7 22.7 L94.7 27.4"/>
<path d="M87.6 27.4 A6.4 6.4 0 1 0 80.3 31.8"/>
<path d="M84 31.6 L99.1 31.6 M84 37 L99.1 37 M84 42.1 L99.1 42.1"/>
</svg>

<div class="abs" style="left:232px;top:1550px;width:2630px;height:80px;background:#fff"></div>
<svg style="left:254px;top:1578px" width="40" height="40" viewBox="0 0 40 40" fill="none" stroke="#0066ff" stroke-width="1.8" stroke-linecap="round" stroke-linejoin="round"><path d="M8 20.9 L8 12.6 C8 10 10 8.1 12.6 8.1 L27.4 8.1 C30 8.1 32 10 32 12.6 L32 14 M32 22 L32 27.3 C32 29.8 30 31.8 27.4 31.8 L12.6 31.8 C10 31.8 8 29.8 8 27.3 L8 27.2"/><path d="M20 11.8 L27.1 16.5 L27.1 23.5 L20 28 L12.9 23.5 L12.9 16.5 Z M12.9 16.5 L20 19.2 L27.1 16.5 M20 19.2 L20 28"/></svg>
<div class="t" style="left:297px;top:1585px;font-size:28px;color:#0066ff">podexec</div>
<div class="t" style="left:753px;top:1585px;font-size:28px;color:#454545">ready</div>
<div class="abs" style="left:1012px;top:1575px;width:124px;height:48px;border-radius:7px;background:#f0f9eb;border:2px solid #e1f3d8"></div>
<div class="t" style="left:1031px;top:1587px;font-size:24px;color:#67c23a;letter-spacing:0.3px">Running</div>
<div class="t" style="left:1272px;top:1585px;font-size:28px;color:#454545">podexec:1.10.0-202203011440-amd64</div>
<div class="t" style="left:2284px;top:1585px;font-size:28px;color:#454545">N/A</div>
<svg style="left:2660px;top:1570px" width="110" height="55" viewBox="0 0 110 55" fill="none" stroke="#0066ff" stroke-width="2.5" stroke-linecap="round" stroke-linejoin="round">
<path d="M36.5 25.4 A13.9 13.9 0 0 0 12.8 16.2 M11.3 12.4 L11.3 18.8 L17.3 18.8"/>
<path d="M9 26.5 A13.9 13.9 0 0 0 32.5 36.3 M28 32.9 L34.2 32.9 L34.2 39.1"/>
<path d="M80.3 41.9 L78 41.9 L77.5 37.5 L73 34.8 L69 36.8 L64.5 29.5 L67.6 26.8 L67.6 22.5 L64.5 20 L69 12.7 L73 14.6 L77 12 L77.5 8.5 L85 8.5 L85.5 12 L89.7 14.6 L93.6 12.7 L98 20 L94.7 22.7 L94.7 27.4"/>
<path d="M87.6 27.4 A6.4 6.4 0 1 0 80.3 31.8"/>
<path d="M84 31.6 L99.1 31.6 M84 37 L99.1 37 M84 42.1 L99.1 42.1"/>
</svg>

<!-- floating link button -->
<div class="abs" style="left:2808px;top:1526px;width:64px;height:64px;border-radius:50%;border:2px solid #0066ff;background:#fff"></div>
<svg style="left:2808px;top:1526px" width="64" height="64" viewBox="0 0 64 64" fill="none" stroke="#0066ff" stroke-width="2.6" stroke-linecap="round" stroke-linejoin="round">
<path d="M26.8 31.8 L22.3 36.6 C21.6 37.3 21.6 37.9 22.3 38.6 L25.9 42.2 C26.4 42.7 27 42.7 27.6 42.1 L31.9 36.9"/>
<path d="M29.3 34.7 L34.8 28.9"/>
<path d="M31.9 26.6 L36.8 21.8 C37.3 21.3 37.9 21.3 38.4 21.8 L42.1 25.6 C42.6 26.1 42.6 26.7 42.1 27.2 L37.3 31.6"/>
</svg>
<!-- scrollbar -->
<div class="abs" style="left:2902px;top:241px;width:10px;height:777px;border-radius:5px;background:#b5b5b7"></div>
</body></html>
